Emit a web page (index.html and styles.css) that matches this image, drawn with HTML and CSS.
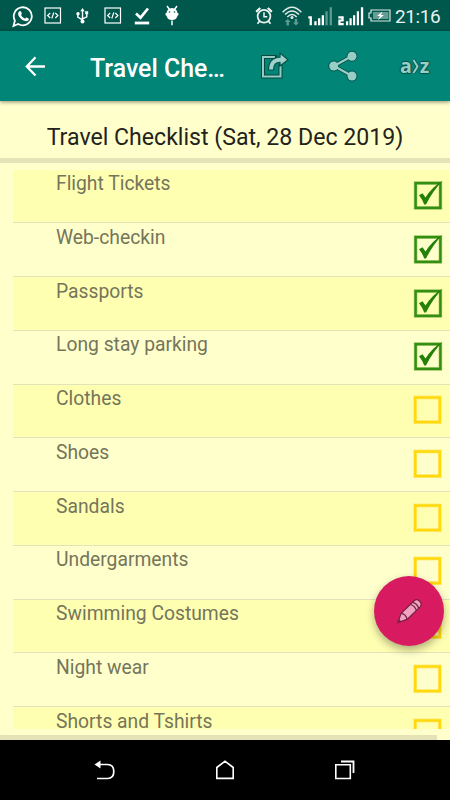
FILE: index.html
```html
<!DOCTYPE html>
<html lang="en">
<head>
<meta charset="utf-8">
<title>Travel Checklist</title>
<link rel="stylesheet" href="styles.css">
</head>
<body>
<svg width="0" height="0" class="defs">
  <symbol id="checked" viewBox="0 0 32 32">
    <rect x="3.600" y="4.100" width="24.800" height="24.800" fill="none" stroke="#a8cf70" stroke-width="3.600"/>
    <rect x="3.600" y="4.100" width="24.800" height="24.800" fill="none" stroke="#348e12" stroke-width="2.400"/>
    <path d="M7 16.200l3.500-2 3 4.400Q20 8 30.500 1.800 20.500 12.500 14 25.500h-1.800Q10.500 20.500 7 16.200z" fill="#248008"/>
  </symbol>
  <symbol id="unchecked" viewBox="0 0 32 32">
    <rect x="3.200" y="3.500" width="24.600" height="24.600" fill="none" stroke="#ffea70" stroke-width="3.800"/>
    <rect x="3.200" y="3.500" width="24.600" height="24.600" fill="none" stroke="#ffd90c" stroke-width="2.400"/>
  </symbol>
  <symbol id="code" viewBox="0 0 18 18">
    <rect x="1" y="1" width="15.500" height="15" fill="none" stroke="#fff" stroke-width="1.200"/>
    <path d="M6.200 6L3.600 8.500l2.600 2.500M11.300 6l2.600 2.500-2.600 2.500M9.800 5.500l-2 6" fill="none" stroke="#fff" stroke-width="1.200"/>
  </symbol>
</svg>
<div class="screen">
  <header class="status">
    <div class="notifications">
      <svg width="22" height="24" viewBox="0 0 22 24"><path d="M1.500 22l1.400-5.400A9 9 0 1 1 6.200 20z" fill="none" stroke="#fff" stroke-width="1.800"/><path d="M7 7.500c1-1 1.800-.7 2.100.2l.7 1.600c.3.800-.9 1.300-.6 2 .8 1.500 1.900 2.500 3.500 3.200.8.200 1.200-1.300 1.900-1.100l2 1c.7.500-.2 2-.8 2.400-2.900 1.700-9-2.600-9.600-6.300-.2-1 .1-2.200.8-3z" fill="#fff"/></svg>
      <svg width="18" height="18"><use href="#code"/></svg>
      <svg width="13" height="16" viewBox="0 0 13 16"><path d="M6.500 2v11M1.800 6v3l4.700 2.800M10.800 5v3.800l-4.300 2" fill="none" stroke="#fff" stroke-width="1.400"/><path d="M4.300 3.300L6.500 0l2.200 3.300z" fill="#fff"/><circle cx="6.500" cy="13.600" r="2" fill="#fff"/><circle cx="2" cy="5.800" r="1.700" fill="#fff"/><path d="M9.200 3.200h3v3h-3z" fill="#fff"/></svg>
      <svg width="18" height="18"><use href="#code"/></svg>
      <svg width="16" height="18" viewBox="0 0 16 18"><path d="M2 6.500l4.500 4.200L14 1.500" fill="none" stroke="#fff" stroke-width="2.700"/><path d="M.8 14.600h14.400v2.800H.8z" fill="#fff"/></svg>
      <svg width="14" height="21" viewBox="0 0 14 21"><path d="M2 1l2.500 3.500M12 1L9.500 4.500M7 15.500v4.700" stroke="#fff" stroke-width="1.500"/><path d="M1 8h12c1 1.200.8 2.500-.5 2.700C12 13.500 10 15 7 15s-5-1.500-5.500-4.300C.2 10.500 0 9 1 8z" fill="#fff"/><circle cx="7" cy="8.500" r="5.500" fill="#fff"/><circle cx="4.500" cy="7" r=".8" fill="#00574b"/><circle cx="9.500" cy="7" r=".8" fill="#00574b"/></svg>
    </div>
    <div class="system">
      <svg width="18" height="18" viewBox="0 0 18 18" fill="none" stroke="#eef5f3"><circle cx="9" cy="9.300" r="6.400" stroke-width="1.700"/><path d="M9 5.300v4.500h3.300" stroke-width="1.500"/><path d="M1.200 4.800L5.200 1M16.800 4.800L12.800 1" stroke-width="2.300"/><path d="M4.700 14l-2.200 2.800M13.300 14l2.200 2.800" stroke-width="1.700"/></svg>
      <svg width="20" height="20" viewBox="0 0 20 20"><path d="M.6 6.200q9.400-9.800 18.800 0M3 8.600q7-7.400 14 0M5.300 10.900q4.700-5 9.400 0" fill="none" stroke="#dcebe8" stroke-width="1.500"/><circle cx="10" cy="11.500" r="1.500" fill="#dcebe8"/><path d="M5.700 13l3 3H6.900v3.400H4.500V16H2.700zM14 19.500l-3-3h1.800V13h2.400v3.500H17z" fill="#619b91"/></svg>
      <svg width="25" height="19" viewBox="0 0 25 19"><path d="M.3 9.200h3.600v9H1.600v-6.700H.3zM6.300 14.200h2.300v4H6.300zM10 11.200h2.300v7H10zM13.700 8.200H16v10h-2.300z" fill="#fff"/><path d="M17.400 4.200h2.300v14h-2.300zM21.600.2H24v18h-2.400z" fill="#5c988e"/></svg>
      <svg width="26" height="19" viewBox="0 0 26 19"><path d="M.3 9.200h5.400v5.400H2.600V16h3.100v2.200H.3v-5.600h3.100v-1.200H.3zM8 14.200h2.200v4H8zM11.500 11.200h2.200v7h-2.200zM15 8.200h2.200v10H15zM18.800 4.200H21v14h-2.200zM22.900.2h2.300v18h-2.300z" fill="#fff"/></svg>
      <svg width="23" height="13" viewBox="0 0 23 13"><path d="M3 1h19v11H3V9H1V4h2z" fill="none" stroke="#dbe9e6" stroke-width="1.200"/><path d="M5 3h15.500v7H5z" fill="#659d94"/><path d="M14.500 2.400L9 7h3l-2 4 6-5h-3z" fill="#fff"/></svg>
      <time>21:16</time>
    </div>
  </header>
  <nav class="toolbar">
    <svg class="back" width="22" height="22" viewBox="0 0 22 22"><path d="M20 11.500H2.500M10.500 2.300L1.800 11.500l8.700 9" fill="none" stroke="#fff" stroke-width="2.300"/></svg>
    <h1>Travel Che…</h1>
    <svg class="export" width="30" height="28" viewBox="0 0 30 28"><path d="M20.500 12v12.500H3V5h14" fill="none" stroke="#06483f" stroke-width="4"/><path d="M20.500 14v10.500H3V5h12" fill="none" stroke="#94cbc4" stroke-width="2"/><path d="M8.500 18c0-8 4-12.500 11.500-12.800V1l8 6.700-8 6.300V10.300c-4 0-6.500 3-6.500 7.700z" fill="#a1d1cb" stroke="#06554b" stroke-width="1.200"/></svg>
    <svg class="share" width="30" height="32" viewBox="0 0 30 32"><g fill="#06554b" stroke="#06554b"><path d="M24 6L6 16l18 10" fill="none" stroke-width="4"/><circle cx="24" cy="6.200" r="5"/><circle cx="5.700" cy="16" r="5"/><circle cx="24" cy="26" r="5"/></g><g fill="#99cec7"><path d="M24 6L6 16l18 10" fill="none" stroke="#99cec7" stroke-width="2.200"/><circle cx="24" cy="6.200" r="4.500"/><circle cx="5.700" cy="16" r="4.500"/><circle cx="24" cy="26" r="4.500"/></g></svg>
    <span class="sort">a<svg width="8" height="17" viewBox="0 0 8 17"><path d="M1.500 2l4 6.500-4 6.500" fill="none" stroke="#06554b" stroke-width="3.600"/><path d="M1.500 2l4 6.500-4 6.500" fill="none" stroke="#99cec7" stroke-width="2"/></svg>z</span>
  </nav>
  <main>
    <h2>Travel Checklist (Sat, 28 Dec 2019)</h2>
    <ul>
      <li><span>Flight Tickets</span><svg><use href="#checked"/></svg></li>
      <li><span>Web-checkin</span><svg><use href="#checked"/></svg></li>
      <li><span>Passports</span><svg><use href="#checked"/></svg></li>
      <li><span>Long stay parking</span><svg><use href="#checked"/></svg></li>
      <li><span>Clothes</span><svg><use href="#unchecked"/></svg></li>
      <li><span>Shoes</span><svg><use href="#unchecked"/></svg></li>
      <li><span>Sandals</span><svg><use href="#unchecked"/></svg></li>
      <li><span>Undergarments</span><svg><use href="#unchecked"/></svg></li>
      <li><span>Swimming Costumes</span><svg><use href="#unchecked"/></svg></li>
      <li><span>Night wear</span><svg><use href="#unchecked"/></svg></li>
      <li><span>Shorts and Tshirts</span><svg><use href="#unchecked"/></svg></li>
    </ul>
    <div class="bottom-rule"></div>
    <button class="fab" aria-label="Edit"><svg width="26" height="26" viewBox="0 0 28 28"><path d="M2 26.500L5.500 16.500 19.500 3q3-2.500 6 .5t.5 6L12 23z" fill="#f0a3c0" stroke="#74213f" stroke-width="1.300"/><path d="M5.500 16.500q5 .5 6.500 6.500M15.500 7q5 1.500 6.500 6.500M18 4.700q5 1.500 6.500 6.500" fill="none" stroke="#74213f" stroke-width="1.400"/><path d="M2 26.500l1.300-3.600 2.300 2.200z" fill="#74213f"/></svg></button>
  </main>
  <footer>
    <svg width="22" height="20" viewBox="0 0 22 20"><path d="M3 4.500h10.500q6.300 0 6.300 7t-6.300 7H3" fill="none" stroke="#fff" stroke-width="1.700"/><path d="M.5 4.500l6-4v8z" fill="#fff"/></svg>
    <svg width="20" height="20" viewBox="0 0 20 20"><path d="M1.800 18.400V7.500L10 1.200l8.200 6.300v10.900z" fill="none" stroke="#fff" stroke-width="1.600"/></svg>
    <svg width="21" height="20" viewBox="0 0 21 20"><path d="M1.800 4.800h14.500v13.700H1.800z" fill="none" stroke="#fff" stroke-width="1.600"/><path d="M7 1.500h12.500V13" fill="none" stroke="#fff" stroke-width="1.800"/></svg>
  </footer>
</div>
</body>
</html>
```

FILE: styles.css
```css
* { box-sizing: border-box; }
body { margin: 0; font-family: Roboto, sans-serif; }
svg { display: block; flex: none; }
.defs { position: absolute; }
.screen { width: 450px; height: 800px; display: flex; flex-direction: column; overflow: hidden; background: #ffffcc; }
.status { height: 31px; flex: none; display: flex; justify-content: space-between; align-items: center; background: #00574b; padding: 0 10px 0 12px; }
.notifications { display: flex; align-items: center; gap: 12px; }
.notifications svg:nth-child(1) { margin-right: -2px; }
.notifications svg:nth-child(3) { margin: 0 3px 0 2px; }
.notifications svg:nth-child(5) { margin: 0 3px 0 0; }
.system { display: flex; align-items: center; color: #e9f2f0; }
.system svg:nth-child(1) { margin-right: 9px; }
.system svg:nth-child(2) { margin-right: 6px; }
.system svg:nth-child(3) { margin: 2px 5px 0 0; }
.system svg:nth-child(4) { margin: 2px 4px 0 0; }
.system time { margin-left: 4px; font-size: 19px; width: 45px; line-height: 24px; padding-top: 2px; white-space: nowrap; letter-spacing: -.4px; }
.toolbar { height: 70px; flex: none; display: flex; align-items: center; background: #008577; box-shadow: 0 1px 4px rgba(0,0,0,.45); z-index: 1; padding-left: 25px; }
.toolbar h1 { margin: 4px 0 0 43px; width: 170px; font-size: 24.900px; font-weight: 500; color: #fff; white-space: nowrap; }
.share { margin-left: 38px; }
.sort { display: flex; align-items: center; margin-left: 42px; color: #99cec7; font: bold 19.500px/24px "Open Sans", sans-serif; text-shadow: 1px 0 1px #06554b, -1px 0 1px #06554b, 0 1px 1px #06554b, 0 -1px 1px #06554b; }
main { flex: 1; min-height: 0; display: flex; flex-direction: column; position: relative; }
h2 { margin: 0; height: 62px; flex: none; padding: 23px 0 0; text-align: center; font-size: 23.120px; line-height: 28px; font-weight: 400; color: #23231c; border-bottom: 5px solid #e5e2b7; white-space: nowrap; }
ul { list-style: none; margin: 6.500px 0 0 13px; padding: 0; height: 559px; flex: none; overflow: hidden; }
li { height: 53.760px; display: flex; justify-content: space-between; border-bottom: 1px solid #e3e3b9; padding: 0 6px 0 43px; color: #75755b; font-size: 19.300px; line-height: 18px; }
li:nth-child(odd) { background: #ffffb2; }
li span { padding-top: 5.700px; }
li svg { width: 32px; height: 32px; margin-top: 9.500px; }
.bottom-rule { height: 5px; margin: auto 13px 0 0; background: #e5e2b7; }
.fab { position: absolute; right: 6.500px; bottom: 94px; width: 70px; height: 70px; border: 0; border-radius: 50%; background: #d81b60; padding: 0; display: grid; place-items: center; box-shadow: 0 4px 8px rgba(0,0,0,.32); }
footer { height: 60px; flex: none; background: #000; display: flex; justify-content: center; align-items: center; gap: 99px; padding-right: 2px; }
```
